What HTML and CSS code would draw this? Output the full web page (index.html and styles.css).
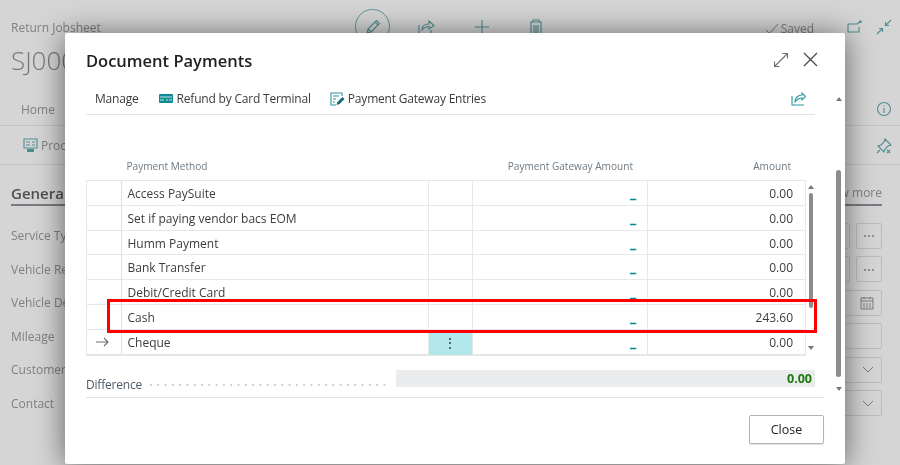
FILE: index.html
```html
<!DOCTYPE html>
<html lang="en">
<head>
<meta charset="utf-8">
<title>Document Payments</title>
<link rel="stylesheet" href="styles.css">
</head>
<body>
<div class="page">
  <div class="bg">
    <header class="bg-top">
      <div class="bg-titles">
        <div class="bg-crumb">Return Jobsheet</div>
        <div class="bg-id">SJ000</div>
      </div>
      <div class="bg-tools">
        <span class="edit-ring"><svg width="18" height="18" viewBox="0 0 18 18"><path class="ts" d="M3 15l1-4L12.500 2.500l3 3L7 14zM11 4l3 3M4 11l3 3"/></svg></span>
        <svg class="tool-share" width="18" height="18" viewBox="0 0 18 18"><path class="ts" d="M2 7v9h12v-4M5 12c0-4 3-6 7-6V3l5 4.500L12 11V8.500c-3 0-5 1-7 3.500z"/></svg>
        <svg class="tool-plus" width="18" height="18" viewBox="0 0 18 18"><path class="ts" d="M9 2v14M2 9h14"/></svg>
        <svg class="tool-bin" width="16" height="18" viewBox="0 0 16 18"><path class="ts" d="M2 4h12M5 4V2h6v2M3 4v13h10V4M6 7v8M8 7v8M10 7v8"/></svg>
      </div>
      <div class="bg-status">
        <svg width="14" height="12" viewBox="0 0 14 12"><path class="gs" d="M1 7l3.500 3.500L13 1"/></svg>
        <span>Saved</span>
      </div>
      <svg class="tool-open" width="16" height="14" viewBox="0 0 16 14"><path class="ts" d="M11 4H1v8h11V7M10 4l4-3M12 1h2v2"/></svg>
      <svg class="tool-collapse" width="16" height="16" viewBox="0 0 16 16"><path class="ts" d="M15 1L9.500 6.500M9.500 3v3.500H13M1 15l5.500-5.500M3 9.500h3.500V13"/></svg>
    </header>
    <nav class="bg-tabs">
      <span>Home</span>
      <svg class="info" width="16" height="16" viewBox="0 0 16 16"><circle class="ts" cx="8" cy="8" r="6.500"/><path class="ts" d="M8 7v5M8 4.500v1"/></svg>
    </nav>
    <div class="bg-actions">
      <span class="proc"><svg width="15" height="15" viewBox="0 0 15 15"><path class="ts" d="M1 1h13v9H1zM3 4h4M3 7h4M9 4h3M9 7h3"/><path class="tf" d="M4 11h7v3H4z"/></svg>Process</span>
      <svg class="pin" width="16" height="16" viewBox="0 0 16 16"><path class="ts" d="M9 1l6 6-3 1-3 3-1 3-6-6 3-1 3-3zM4 12l-3 3M11 12l3 3M14 12l-3 3"/></svg>
    </div>
    <section class="bg-form">
      <div class="bg-sec">
        <span class="bg-general">General</span>
        <span class="bg-more">Show more</span>
      </div>
      <div class="bg-row"><span>Service Type</span><span class="bg-input short"></span><span class="bg-dots">&#8943;</span></div>
      <div class="bg-row"><span>Vehicle Reg</span><span class="bg-input short"></span><span class="bg-dots">&#8943;</span></div>
      <div class="bg-row"><span>Vehicle Desc</span><span class="bg-input"><svg width="14" height="14" viewBox="0 0 14 14"><path class="gs" d="M1 2h12v11H1zM1 5h12M4 1v2M10 1v2M4 7v5M7 7v5M10 7v5"/></svg></span></div>
      <div class="bg-row"><span>Mileage</span><span class="bg-input"></span></div>
      <div class="bg-row"><span>Customer</span><span class="bg-input"><svg width="12" height="7" viewBox="0 0 12 7"><path class="gs" d="M1 1l5 5 5-5"/></svg></span></div>
      <div class="bg-row"><span>Contact</span><span class="bg-input"><svg width="12" height="7" viewBox="0 0 12 7"><path class="gs" d="M1 1l5 5 5-5"/></svg></span></div>
    </section>
  </div>

  <div class="dialog" role="dialog">
    <div class="dlg-main">
      <div class="dlg-head">
        <h1>Document Payments</h1>
        <div class="dlg-win">
          <svg width="16" height="16" viewBox="0 0 16 16"><path class="ws" d="M1.500 14.500l13-13M9.500 1.500h5v5M1.500 9.500v5h5"/></svg>
          <svg width="15" height="15" viewBox="0 0 15 15"><path class="xs" d="M1 1l13 13M14 1L1 14"/></svg>
        </div>
      </div>
      <div class="dlg-bar">
        <span class="act first">Manage</span>
        <span class="act refund"><svg width="14" height="9" viewBox="0 0 14 9"><rect class="card" width="14" height="9" rx="1"/><path class="cardline" d="M1 3h12M1 6h4M7 6h2M10 6h3"/></svg>Refund by Card Terminal</span>
        <span class="act"><svg width="15" height="14" viewBox="0 0 15 14"><path class="ts2" d="M12 4V1H1v12h5M3 4h6M3 7h3M3 10h2"/><path class="tf2" d="M6.500 13l1-3 5-5 2 2-5 5z"/></svg>Payment Gateway Entries</span>
        <svg class="bar-share" width="15" height="14" viewBox="0 0 15 14"><path class="ts2" d="M1 4v9h12M4 10c0-4 3-7 7-7V1l3.500 3.500L11 8V6c-3 0-5 1.500-7 4z"/></svg>
      </div>

      <div class="grid-wrap">
        <div class="tbl">
          <div class="tr th"><span></span><span class="lab">Payment Method</span><span></span><span class="num">Payment Gateway Amount</span><span class="num amt">Amount</span></div>
          <div class="rows">
            <div class="tr"><span></span><span class="c">Access PaySuite</span><span></span><span class="c num link">_</span><span class="c num val">0.00</span></div>
            <div class="tr"><span></span><span class="c">Set if paying vendor bacs EOM</span><span></span><span class="c num link">_</span><span class="c num val">0.00</span></div>
            <div class="tr"><span></span><span class="c">Humm Payment</span><span></span><span class="c num link">_</span><span class="c num val">0.00</span></div>
            <div class="tr"><span></span><span class="c">Bank Transfer</span><span></span><span class="c num link">_</span><span class="c num val">0.00</span></div>
            <div class="tr"><span></span><span class="c">Debit/Credit Card</span><span></span><span class="c num link">_</span><span class="c num val">0.00</span></div>
            <div class="tr"><span></span><span class="c">Cash</span><span></span><span class="c num link">_</span><span class="c num val">243.60</span></div>
            <div class="tr"><span class="arrow"><svg width="13" height="10" viewBox="0 0 13 10"><path class="ws" d="M0 5h12M8 1l4 4-4 4"/></svg></span><span class="c">Cheque</span><span class="more">&#8942;</span><span class="c num link">_</span><span class="c num val">0.00</span></div>
          </div>
        </div>
        <div class="sb-inner"><i class="up"></i><b></b><i class="down"></i></div>
        <div class="red-box"></div>
      </div>

      <div class="diff">
        <span class="diff-l">Difference</span>
        <span class="diff-dots"></span>
        <span class="diff-v">0.00</span>
      </div>
      <div class="dlg-foot"><button class="close" type="button">Close</button></div>
    </div>
    <div class="sb-outer"><i class="up"></i><b></b><i class="down"></i></div>
  </div>
</div>
</body>
</html>
```

FILE: styles.css
```css
* { box-sizing: border-box; }
html, body { margin: 0; padding: 0; }
body { font-family: "Open Sans", "Noto Sans", sans-serif; background: #d5d5d5; }
svg { display: block; fill: none; }
.ts { stroke: #4f8d90; stroke-width: 1.1; fill: none; }
.tf { fill: #4f8d90; }
.gs { stroke: #7b7b7b; stroke-width: 1; fill: none; }
.ts2 { stroke: #2b98a0; stroke-width: 1.1; fill: none; }
.tf2 { fill: #0b6a72; }
.ws { stroke: #6e6e6e; stroke-width: 1.1; fill: none; }
.xs { stroke: #4a4a4a; stroke-width: 1.3; fill: none; }
.card { fill: #0d8a92; }
.cardline { stroke: #d8f2f3; stroke-width: 0.9; }

.page { position: relative; width: 900px; height: 465px; overflow: hidden; background: #d5d5d5; filter: blur(0.3px); }

/* background page */
.bg { color: #7f8080; font-size: 12px; }
.bg-top { display: flex; align-items: flex-start; height: 96px; padding: 0 8px 0 11px; }
.bg-titles { width: 344px; padding-top: 20px; }
.bg-crumb { font-size: 12px; line-height: 16px; }
.bg-id { font-size: 26px; font-weight: 300; line-height: 36px; margin-top: 6px; color: #777; }
.bg-tools { display: flex; align-items: center; flex: 1; padding-top: 9px; }
.edit-ring { display: flex; align-items: center; justify-content: center; width: 35px; height: 35px; border: 1px solid #5a989b; border-radius: 50%; }
.tool-share { margin-left: 27px; }
.tool-plus { margin-left: 38px; }
.tool-bin { margin-left: 37px; }
.bg-status { display: flex; align-items: center; gap: 2px; font-size: 12px; padding-top: 20px; margin-right: 33px; }
.tool-open { margin-top: 20px; }
.tool-collapse { margin-top: 19px; margin-left: 13px; }
.bg-tabs { display: flex; justify-content: space-between; align-items: center; height: 30px; padding: 0 8px 3px 21px; border-bottom: 1px solid #c3c3c3; }
.bg-actions { display: flex; justify-content: space-between; align-items: center; height: 39px; padding: 1px 8px 0 23px; border-bottom: 1px solid #c3c3c3; }
.proc { display: flex; align-items: center; gap: 3px; }
.bg-form { padding: 0 18px 0 11px; }
.bg-sec { display: flex; justify-content: space-between; height: 41px; border-bottom: 2px solid #777c82; padding-top: 18px; }
.bg-general { font-size: 15px; font-weight: 600; color: #4f4f4f; line-height: 20px; }
.bg-more { color: #7f8080; font-size: 12px; line-height: 20px; }
.bg-row { display: flex; align-items: center; gap: 6px; height: 33.5px; }
.bg-row > span:first-child { flex: 1; }
.bg-sec + .bg-row { margin-top: 13px; }
.bg-input { display: flex; align-items: center; justify-content: flex-end; width: 300px; height: 26px; padding-right: 7px; border: 1px solid #bcbcbc; border-radius: 2px; }
.bg-input.short { width: 268px; }
.bg-dots { display: flex; align-items: center; justify-content: center; width: 26px; height: 26px; border: 1px solid #bcbcbc; border-radius: 2px; color: #666; font-size: 12px; }

/* dialog */
.dialog { position: absolute; left: 65px; top: 33px; width: 780px; height: 431px; display: flex; background: #fff; border-radius: 2px; box-shadow: 0 2px 30px rgba(0, 0, 0, .55); color: #333; }
.dlg-main { width: 759px; padding-left: 21px; }
.dlg-head { display: flex; justify-content: space-between; align-items: center; height: 43px; padding: 12px 0 0; }
.dlg-head h1 { margin: 0; font-size: 16.5px; font-weight: 600; color: #212121; }
.dlg-win { display: flex; gap: 14px; margin-right: 6px; margin-top: -2px; }
.dlg-bar { display: flex; align-items: center; height: 39px; width: 729px; padding-top: 7px; border-bottom: 1px solid #e5e5e5; font-size: 12px; letter-spacing: -.2px; }
.act { display: flex; align-items: center; gap: 3px; margin-right: 19px; color: #3c3c3c; }
.act.first { margin-left: 9px; margin-right: 20px; }
.act.refund { gap: 4px; margin-right: 19px; }
.bar-share { margin-left: auto; margin-right: 9px; }

.grid-wrap { position: relative; width: 729px; display: flex; margin-top: 40px; }
.tbl { width: 720px; }
.tr { display: grid; grid-template-columns: 34.5px 307px 44px 175.5px 158px; height: 24.75px; }
.th { height: 25px; padding-bottom: 3px; font-size: 10.1px; color: #707a83; align-items: center; }
.lab { padding-left: 6px; }
.num { text-align: right; }
.amt { padding-right: 14px; }
.th .num:not(.amt) { padding-right: 14px; }
.rows { border: 1px solid #e6e6e6; border-width: 1px 0 2px 1px; }
.rows .tr { border-bottom: 1px solid #e8e8e8; }
.rows .tr:last-child { border-bottom: 0; }
.rows .tr > span { border-right: 1px solid #e8e8e8; }
.rows .tr > span:first-child { border-right: 1px solid #e0e0e0; }
.c { font-size: 12px; line-height: 25.5px; color: #3c3c3c; padding-left: 6px; white-space: nowrap; }
.val { padding-right: 12px; }
.rows .link { color: #0b8b92; padding-right: 11px; font-size: 14px; line-height: 24px; font-weight: 700; -webkit-text-stroke: .5px #0b8b92; }
.arrow { display: flex; align-items: center; justify-content: center; padding-right: 2px; }
.more { background: #b2e8eb; display: flex; align-items: center; justify-content: center; font-size: 14px; color: #333; }

.sb-inner { width: 9px; height: 165px; display: flex; flex-direction: column; align-items: center; justify-content: space-between; margin-top: 30px; }
.sb-inner b { width: 4px; flex: 1; margin: 4px 0 38px; border-radius: 2px; background: #8c8c8c; }
.up { width: 0; height: 0; border: 3px solid transparent; border-top: 0; border-bottom: 4px solid #777; }
.down { width: 0; height: 0; border: 3px solid transparent; border-bottom: 0; border-top: 4px solid #777; }
.red-box { position: absolute; left: 21px; top: 144px; width: 710px; height: 34px; border: 3px solid #f00; }

.diff { display: flex; align-items: flex-end; width: 738px; height: 42px; padding-bottom: 4px; border-bottom: 1px solid #e2e2e2; }
.diff-l { width: 64px; margin-bottom: -2px; font-size: 12px; letter-spacing: -.2px; color: #4e5a64; line-height: 20px; }
.diff-dots { width: 236px; height: 2px; margin: 0 10px 7px 0; background: radial-gradient(circle at 1px 1px, #cfcfcf 1px, transparent 1.1px) 0 0 / 7.3px 2px repeat-x; }
.diff-v { width: 419px; height: 17px; margin-bottom: 6px; background: #ebecee; text-align: right; padding-right: 3px; font-size: 12.5px; line-height: 17px; font-weight: 700; color: #1c7a0c; }
.dlg-foot { display: flex; justify-content: flex-end; width: 738px; padding-top: 17px; }
.close { width: 75px; height: 29px; background: #fff; border: 1px solid #b3b3b3; border-radius: 2px; font: 12.5px "Open Sans", sans-serif; color: #222; padding: 0; box-shadow: 0 1px 1px rgba(0,0,0,.12); }

.sb-outer { display: flex; flex-direction: column; align-items: center; width: 9px; height: 300px; margin-top: 64px; margin-left: 10px; }
.sb-outer b { width: 5px; height: 207px; margin: 69px 0 10px; border-radius: 3px; background: #8c8c8c; }
```
